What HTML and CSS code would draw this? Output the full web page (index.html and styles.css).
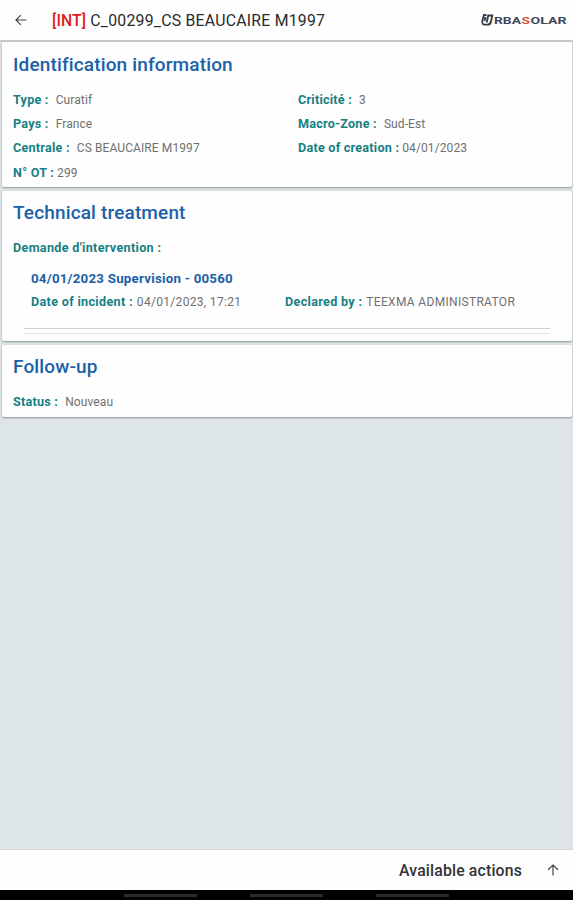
FILE: index.html
```html
<!DOCTYPE html>
<html lang="en">
<head>
<meta charset="utf-8">
<title>C_00299_CS BEAUCAIRE M1997</title>
<link rel="stylesheet" href="styles.css">
</head>
<body>
<header class="topbar">
  <svg class="back" viewBox="0 0 14 14" width="14" height="14"><path d="M12.500 7H2M6.800 2.200 2 7l4.800 4.800"/></svg>
  <h1 class="title"><span class="tag">[INT]</span> C_00299_CS BEAUCAIRE M1997</h1>
  <svg class="logo" viewBox="0 0 88 16" width="88" height="16">
    <path class="mark" d="M6.500 3H4L2.400 8.500Q1.600 12.700 4.800 12.700H7.500Q10.500 12.700 11 9.500L12.300 3.500H8.200L6.700 10.500M5.500 5 4.600 9"/>
    <text class="dark" x="14" y="12" textLength="27" lengthAdjust="spacingAndGlyphs">RBA</text>
    <text class="orange" x="41.500" y="12" textLength="8.500" lengthAdjust="spacingAndGlyphs">S</text>
    <text class="dark" x="50.500" y="12" textLength="36" lengthAdjust="spacingAndGlyphs">OLAR</text>
  </svg>
</header>
<main class="content">
  <section class="card identification">
    <h2>Identification information</h2>
    <div class="fields">
      <div class="column">
        <p><b>Type :</b><span class="wide">Curatif</span></p>
        <p><b>Pays :</b><span class="wide">France</span></p>
        <p><b>Centrale :</b><span class="wide">CS BEAUCAIRE M1997</span></p>
        <p><b>N° OT :</b><span>299</span></p>
      </div>
      <div class="column">
        <p><b>Criticité :</b><span class="wide">3</span></p>
        <p><b>Macro-Zone :</b><span class="wide">Sud-Est</span></p>
        <p><b>Date of creation :</b><span>04/01/2023</span></p>
      </div>
    </div>
  </section>
  <section class="card treatment">
    <h2>Technical treatment</h2>
    <p><b>Demande d'intervention :</b></p>
    <div class="request">
      <h3>04/01/2023 Supervision - 00560</h3>
      <div class="details">
        <p><b>Date of incident :</b><span>04/01/2023, 17:21</span></p>
        <p><b>Declared by :</b><span>TEEXMA ADMINISTRATOR</span></p>
      </div>
    </div>
    <div class="rules"></div>
  </section>
  <section class="card follow">
    <h2>Follow-up</h2>
    <p><b>Status :</b><span class="wide">Nouveau</span></p>
  </section>
</main>
<footer class="actions">
  <span>Available actions</span>
  <svg viewBox="0 0 14 14" width="14" height="14"><path d="M7 12.500V2M2 6.800 7 2l5 4.800"/></svg>
</footer>
<nav class="system"><i></i><i></i><i></i></nav>
</body>
</html>
```
FILE: styles.css
```css
* { box-sizing: border-box; }
body {
  margin: 0;
  height: 900px;
  display: flex;
  flex-direction: column;
  overflow: hidden;
  background: #dde5e6;
  font-family: Roboto, "Liberation Sans", sans-serif;
  color: #707070;
}
h1, h2, h3, p { margin: 0; white-space: nowrap; }
svg { display: block; flex: none; }
.topbar {
  height: 42px;
  padding: 0 5px 0 14px;
  display: flex;
  align-items: center;
  background: #fefefe;
  border-bottom: 2px solid #c8c9ca;
}
.back path, .actions path { fill: none; stroke: #444; stroke-width: 1.2; }
.title {
  margin-left: 24px;
  font-size: 15.800px;
  font-weight: 400;
  letter-spacing: .24px;
  color: #2a2a2a;
}
.title .tag { color: #e01b22; font-weight: 500; letter-spacing: .1px; }
.logo { margin-left: auto; }
.mark { fill: none; stroke: #343b4b; stroke-width: 1.800; }
.logo text { font-size: 9.5px; font-weight: 700; }
.dark { fill: #3f4758; }
.orange { fill: #d9583b; }
.content { flex: 1; padding: 0 1px 0 2px; }
.card {
  padding: 0 11px;
  margin-bottom: 4px;
  background: #fefefe;
  border-radius: 2px;
  box-shadow: 0 1px 2px rgba(0, 0, 0, .36);
}
.identification { height: 145px; }
.treatment { height: 150px; }
.follow { height: 72px; }
h2 {
  padding-top: 10px;
  line-height: 24px;
  font-size: 19px;
  font-weight: 500;
  letter-spacing: .15px;
  color: #1b61a8;
}
.identification h2 { padding-top: 11px; }
p { font-size: 12px; line-height: 24.2px; height: 24.2px; letter-spacing: .1px; }
b { font-size: 12.600px; font-weight: 700; letter-spacing: .24px; color: #168083; }
p span { margin-left: 3px; }
p .wide { margin-left: 7px; }
.fields {
  display: grid;
  grid-template-columns: 285px 1fr;
  padding-top: 11px;
}
.treatment > p, .follow > p { margin-top: 11px; }
.treatment b { letter-spacing: .32px; }
.request { padding: 7px 0 0 18px; }
h3 {
  font-size: 13.300px;
  line-height: 24px;
  font-weight: 700;
  letter-spacing: .23px;
  color: #1b61a8;
}
.details { display: grid; grid-template-columns: 254px 1fr; }
.details p { height: 22px; line-height: 22px; letter-spacing: .32px; }
.details span { margin-left: 4px; }
.rules {
  width: 526px;
  height: 6px;
  margin: 15px 0 0 11px;
  border-top: 1px solid #d2d2d2;
  border-bottom: 1px solid #e4e4e4;
}
.actions {
  height: 41px;
  padding: 0 13px 0 0;
  display: flex;
  align-items: center;
  justify-content: flex-end;
  gap: 24px;
  background: #fefefe;
  border-top: 1px solid #d0d5d5;
  font-size: 15.800px;
  font-weight: 500;
  letter-spacing: .17px;
  color: #333;
}
.system {
  height: 10px;
  padding: 4px 0 0 124px;
  display: flex;
  gap: 53px;
  background: #000;
}
.system i { width: 73px; height: 3px; background: #2c2c2c; }
```
